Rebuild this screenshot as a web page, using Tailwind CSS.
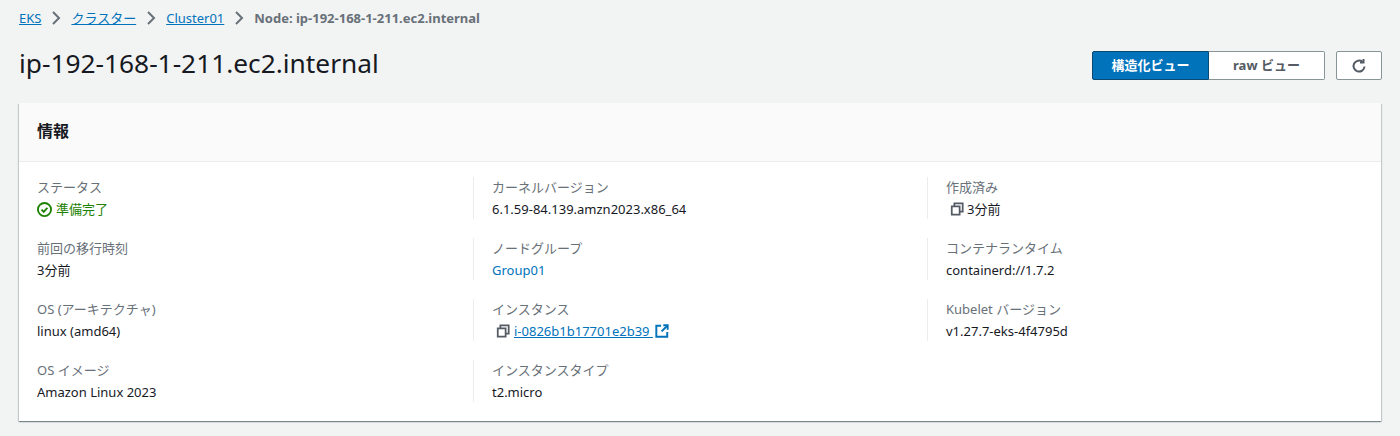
<!DOCTYPE html>
<html lang="ja">
<head>
  <meta charset="UTF-8"/>
  <title>ip-192-168-1-211.ec2.internal</title>
  <script src="https://cdn.jsdelivr.net/npm/@tailwindcss/browser@4"></script>
</head>
<body class="bg-[#f2f3f3] text-[#16191f] font-['Noto_Sans','Noto_Sans_CJK_JP',sans-serif] h-[436px] overflow-hidden">
  <div class="px-[19px] pt-[8px]">
    <!-- breadcrumb -->
    <nav class="flex items-center h-[20px] text-[13px] leading-[20px]">
      <a class="text-[#0073bb] underline">EKS</a>
      <svg class="w-[16px] h-[16px] mx-[7px] text-[#687078]" viewBox="0 0 16 16" fill="none" stroke="currentColor" stroke-width="2"><path d="M5 2l6 6-6 6"/></svg>
      <a class="text-[#0073bb] underline">クラスター</a>
      <svg class="w-[16px] h-[16px] mx-[7px] text-[#687078]" viewBox="0 0 16 16" fill="none" stroke="currentColor" stroke-width="2"><path d="M5 2l6 6-6 6"/></svg>
      <a class="text-[#0073bb] underline">Cluster01</a>
      <svg class="w-[16px] h-[16px] mx-[7px] text-[#687078]" viewBox="0 0 16 16" fill="none" stroke="currentColor" stroke-width="2"><path d="M5 2l6 6-6 6"/></svg>
      <span class="text-[#687078] font-bold">Node: ip-192-168-1-211.ec2.internal</span>
    </nav>

    <!-- title row -->
    <div class="flex items-start justify-between mt-[15px] h-[40px]">
      <h1 class="text-[26.3px] leading-[40px] font-normal">ip-192-168-1-211.ec2.internal</h1>
      <div class="flex items-center mt-[8px] mr-[-1px]">
        <div class="flex h-[29px] text-[13px] font-bold">
          <button class="w-[117px] bg-[#0073bb] text-white border border-[#0a4a74] rounded-l-[2px]">構造化ビュー</button>
          <button class="w-[116px] bg-white text-[#545b64] border border-l-0 border-[#879596] rounded-r-[2px]">raw ビュー</button>
        </div>
        <button class="w-[46px] h-[29px] ml-[11px] bg-white border border-[#879596] rounded-[2px] flex items-center justify-center text-[#545b64]">
          <svg class="w-[16px] h-[16px]" viewBox="0 0 16 16" fill="none" stroke="currentColor" stroke-width="2"><path d="M13.5 8.5A5.5 5.5 0 1 1 11.5 3.8"/><path d="M12.5 1v3.5H9"/></svg>
        </button>
      </div>
    </div>

    <!-- card -->
    <section class="mt-[20px] bg-white shadow-[0_1px_1px_0_rgba(0,28,36,0.3),1px_1px_1px_0_rgba(0,28,36,0.15),-1px_1px_1px_0_rgba(0,28,36,0.15)] h-[318px]">
      <div class="h-[59px] bg-[#fafafa] border-b border-[#eaeded] flex items-center pl-[18px] pb-[2px]">
        <h2 class="text-[16px] font-bold">情報</h2>
      </div>
      <div class="grid grid-cols-3 gap-y-[19px] pt-[15px] text-[13px] leading-[20px]">
        <div class="pl-[18px] h-[42px]">
          <div class="text-[#687078] mb-[2px]">ステータス</div>
          <div class="flex items-center text-[#1d8102]">
            <svg class="w-[15px] h-[15px] mr-[4px]" viewBox="0 0 16 16" fill="none" stroke="currentColor" stroke-width="2"><circle cx="8" cy="8" r="7"/><path d="M4.8 8.2l2.3 2.3 4-4.3"/></svg>
            準備完了
          </div>
        </div>
        <div class="border-l border-[#eaeded] pl-[18px] h-[42px]">
          <div class="text-[#687078] mb-[2px]">カーネルバージョン</div>
          <div>6.1.59-84.139.amzn2023.x86_64</div>
        </div>
        <div class="border-l border-[#eaeded] pl-[18px] h-[42px]">
          <div class="text-[#687078] mb-[2px]">作成済み</div>
          <div class="flex items-center pl-[4px]">
            <svg class="w-[14px] h-[14px] mr-[3px] text-[#545b64]" viewBox="0 0 16 16" fill="none" stroke="currentColor" stroke-width="2"><path d="M2 5h9v9.5H2z"/><path d="M5 5V1.5h9.5V11H11"/></svg>
            3分前
          </div>
        </div>

        <div class="pl-[18px] h-[42px]">
          <div class="text-[#687078] mb-[2px]">前回の移行時刻</div>
          <div>3分前</div>
        </div>
        <div class="border-l border-[#eaeded] pl-[18px] h-[42px]">
          <div class="text-[#687078] mb-[2px]">ノードグループ</div>
          <div class="text-[#0073bb]">Group01</div>
        </div>
        <div class="border-l border-[#eaeded] pl-[18px] h-[42px]">
          <div class="text-[#687078] mb-[2px]">コンテナランタイム</div>
          <div>containerd://1.7.2</div>
        </div>

        <div class="pl-[18px] h-[42px]">
          <div class="text-[#687078] mb-[2px]">OS (アーキテクチャ)</div>
          <div>linux (amd64)</div>
        </div>
        <div class="border-l border-[#eaeded] pl-[18px] h-[42px]">
          <div class="text-[#687078] mb-[2px]">インスタンス</div>
          <div class="flex items-center pl-[4px]">
            <svg class="w-[14px] h-[14px] mr-[4px] text-[#545b64]" viewBox="0 0 16 16" fill="none" stroke="currentColor" stroke-width="2"><path d="M2 5h9v9.5H2z"/><path d="M5 5V1.5h9.5V11H11"/></svg>
            <a class="text-[#0073bb] underline flex items-center">i-0826b1b17701e2b39&nbsp;<svg class="w-[14px] h-[14px] ml-[2px]" viewBox="0 0 16 16" fill="none" stroke="currentColor" stroke-width="2.2"><path d="M7 2H1.5v12.5h12.5V9"/><path d="M9.5 1.5h5v5"/><path d="M14 2L7.5 8.5"/></svg></a>
          </div>
        </div>
        <div class="border-l border-[#eaeded] pl-[18px] h-[42px]">
          <div class="text-[#687078] mb-[2px]">Kubelet バージョン</div>
          <div>v1.27.7-eks-4f4795d</div>
        </div>

        <div class="pl-[18px] h-[42px]">
          <div class="text-[#687078] mb-[2px]">OS イメージ</div>
          <div>Amazon Linux 2023</div>
        </div>
        <div class="border-l border-[#eaeded] pl-[18px] h-[42px]">
          <div class="text-[#687078] mb-[2px]">インスタンスタイプ</div>
          <div>t2.micro</div>
        </div>
      </div>
    </section>
  </div>
</body>
</html>
